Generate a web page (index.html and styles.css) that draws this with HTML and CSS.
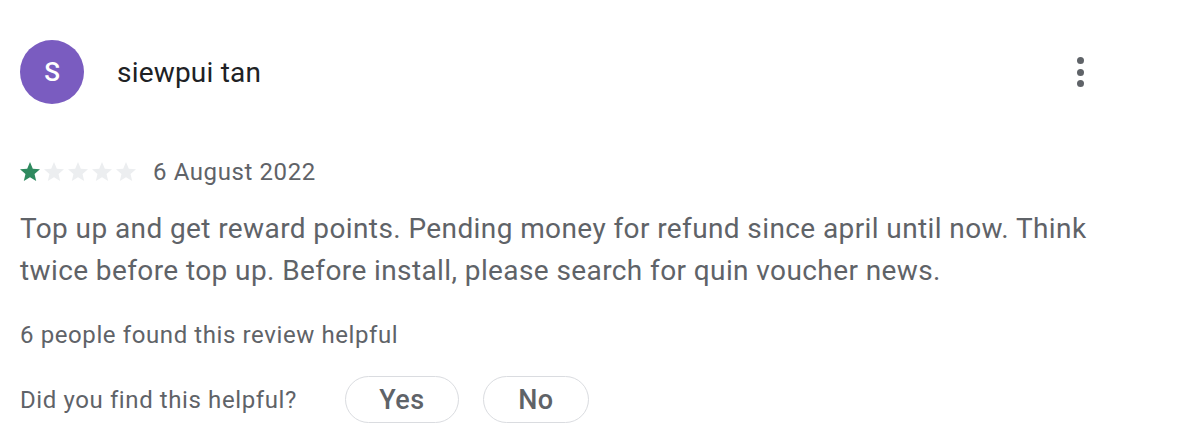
FILE: index.html
```html
<!DOCTYPE html>
<html>
<head>
<meta charset="utf-8">
<link rel="stylesheet" href="styles.css">
</head>
<body>
<div class="review">
  <header class="head">
    <div class="avatar">S</div>
    <div class="name">siewpui tan</div>
    <button class="more" aria-label="More">
      <span class="dot"></span><span class="dot"></span><span class="dot"></span>
    </button>
  </header>
  <div class="meta">
    <div class="stars">
      <svg class="star on" viewBox="0 0 24 24"><path d="M12 17.27L18.18 21l-1.64-7.03L22 9.24l-7.19-.61L12 2 9.19 8.63 2 9.24l5.46 4.73L5.82 21z"/></svg>
      <svg class="star" viewBox="0 0 24 24"><path d="M12 17.27L18.18 21l-1.64-7.03L22 9.24l-7.19-.61L12 2 9.19 8.63 2 9.24l5.46 4.73L5.82 21z"/></svg>
      <svg class="star" viewBox="0 0 24 24"><path d="M12 17.27L18.18 21l-1.64-7.03L22 9.24l-7.19-.61L12 2 9.19 8.63 2 9.24l5.46 4.73L5.82 21z"/></svg>
      <svg class="star" viewBox="0 0 24 24"><path d="M12 17.27L18.18 21l-1.64-7.03L22 9.24l-7.19-.61L12 2 9.19 8.63 2 9.24l5.46 4.73L5.82 21z"/></svg>
      <svg class="star" viewBox="0 0 24 24"><path d="M12 17.27L18.18 21l-1.64-7.03L22 9.24l-7.19-.61L12 2 9.19 8.63 2 9.24l5.46 4.73L5.82 21z"/></svg>
    </div>
    <span class="date">6 August 2022</span>
  </div>
  <p class="text">Top up and get reward points. Pending money for refund since april until now. Think twice before top up. Before install, please search for quin voucher news.</p>
  <div class="helpful-count">6 people found this review helpful</div>
  <div class="ask">
    <span class="ask-label">Did you find this helpful?</span>
    <button class="pill yes">Yes</button>
    <button class="pill no">No</button>
  </div>
</div>
</body>
</html>
```
FILE: styles.css
```css
html, body {
  margin: 0;
  padding: 0;
  background: #ffffff;
}
body {
  font-family: Roboto, "Noto Sans", Arial, sans-serif;
  color: #5f6368;
}
.review {
  width: 1100px;
  padding: 40px 0 0 20px;
}
.head {
  display: flex;
  align-items: center;
  height: 64px;
}
.avatar {
  width: 64px;
  height: 64px;
  border-radius: 50%;
  background: #7a5cc0;
  color: #fff;
  font-size: 26px;
  font-weight: 500;
  display: flex;
  align-items: center;
  justify-content: center;
}
.name {
  margin-left: 33px;
  font-size: 28px;
  color: #202124;
  letter-spacing: 0.2px;
  flex: 1;
}
.more {
  width: 48px;
  height: 48px;
  border: 0;
  background: transparent;
  padding: 0;
  display: flex;
  flex-direction: column;
  align-items: center;
  justify-content: center;
  gap: 4.5px;
  margin-right: 16px;
}
.dot {
  width: 7px;
  height: 7px;
  border-radius: 50%;
  background: #5f6368;
}
.meta {
  display: flex;
  align-items: center;
  margin-top: 54px;
  height: 28px;
}
.stars {
  display: flex;
  margin-left: -2px;
}
.star {
  width: 24px;
  height: 24px;
  fill: #eceef0;
}
.star.on {
  fill: #2f8a5f;
}
.date {
  margin-left: 15px;
  font-size: 24px;
  letter-spacing: 0.6px;
}
.text {
  margin: 22px 0 0 0;
  width: 1100px;
  font-size: 28px;
  line-height: 42px;
  letter-spacing: 0.4px;
}
.helpful-count {
  margin-top: 30px;
  font-size: 24px;
  line-height: 26px;
  letter-spacing: 0.6px;
}
.ask {
  display: flex;
  align-items: center;
  margin-top: 28px;
}
.ask-label {
  font-size: 24px;
  letter-spacing: 0.6px;
  margin-right: 48px;
}
.pill {
  height: 47px;
  border: 1.5px solid #dadce0;
  border-radius: 24px;
  background: #fff;
  color: #5f6368;
  font-family: Roboto, Arial, sans-serif;
  font-size: 27px;
  font-weight: 500;
  letter-spacing: 0.5px;
  padding: 0;
}
.yes { width: 114px; margin-right: 24px; }
.no { width: 106px; }
```
